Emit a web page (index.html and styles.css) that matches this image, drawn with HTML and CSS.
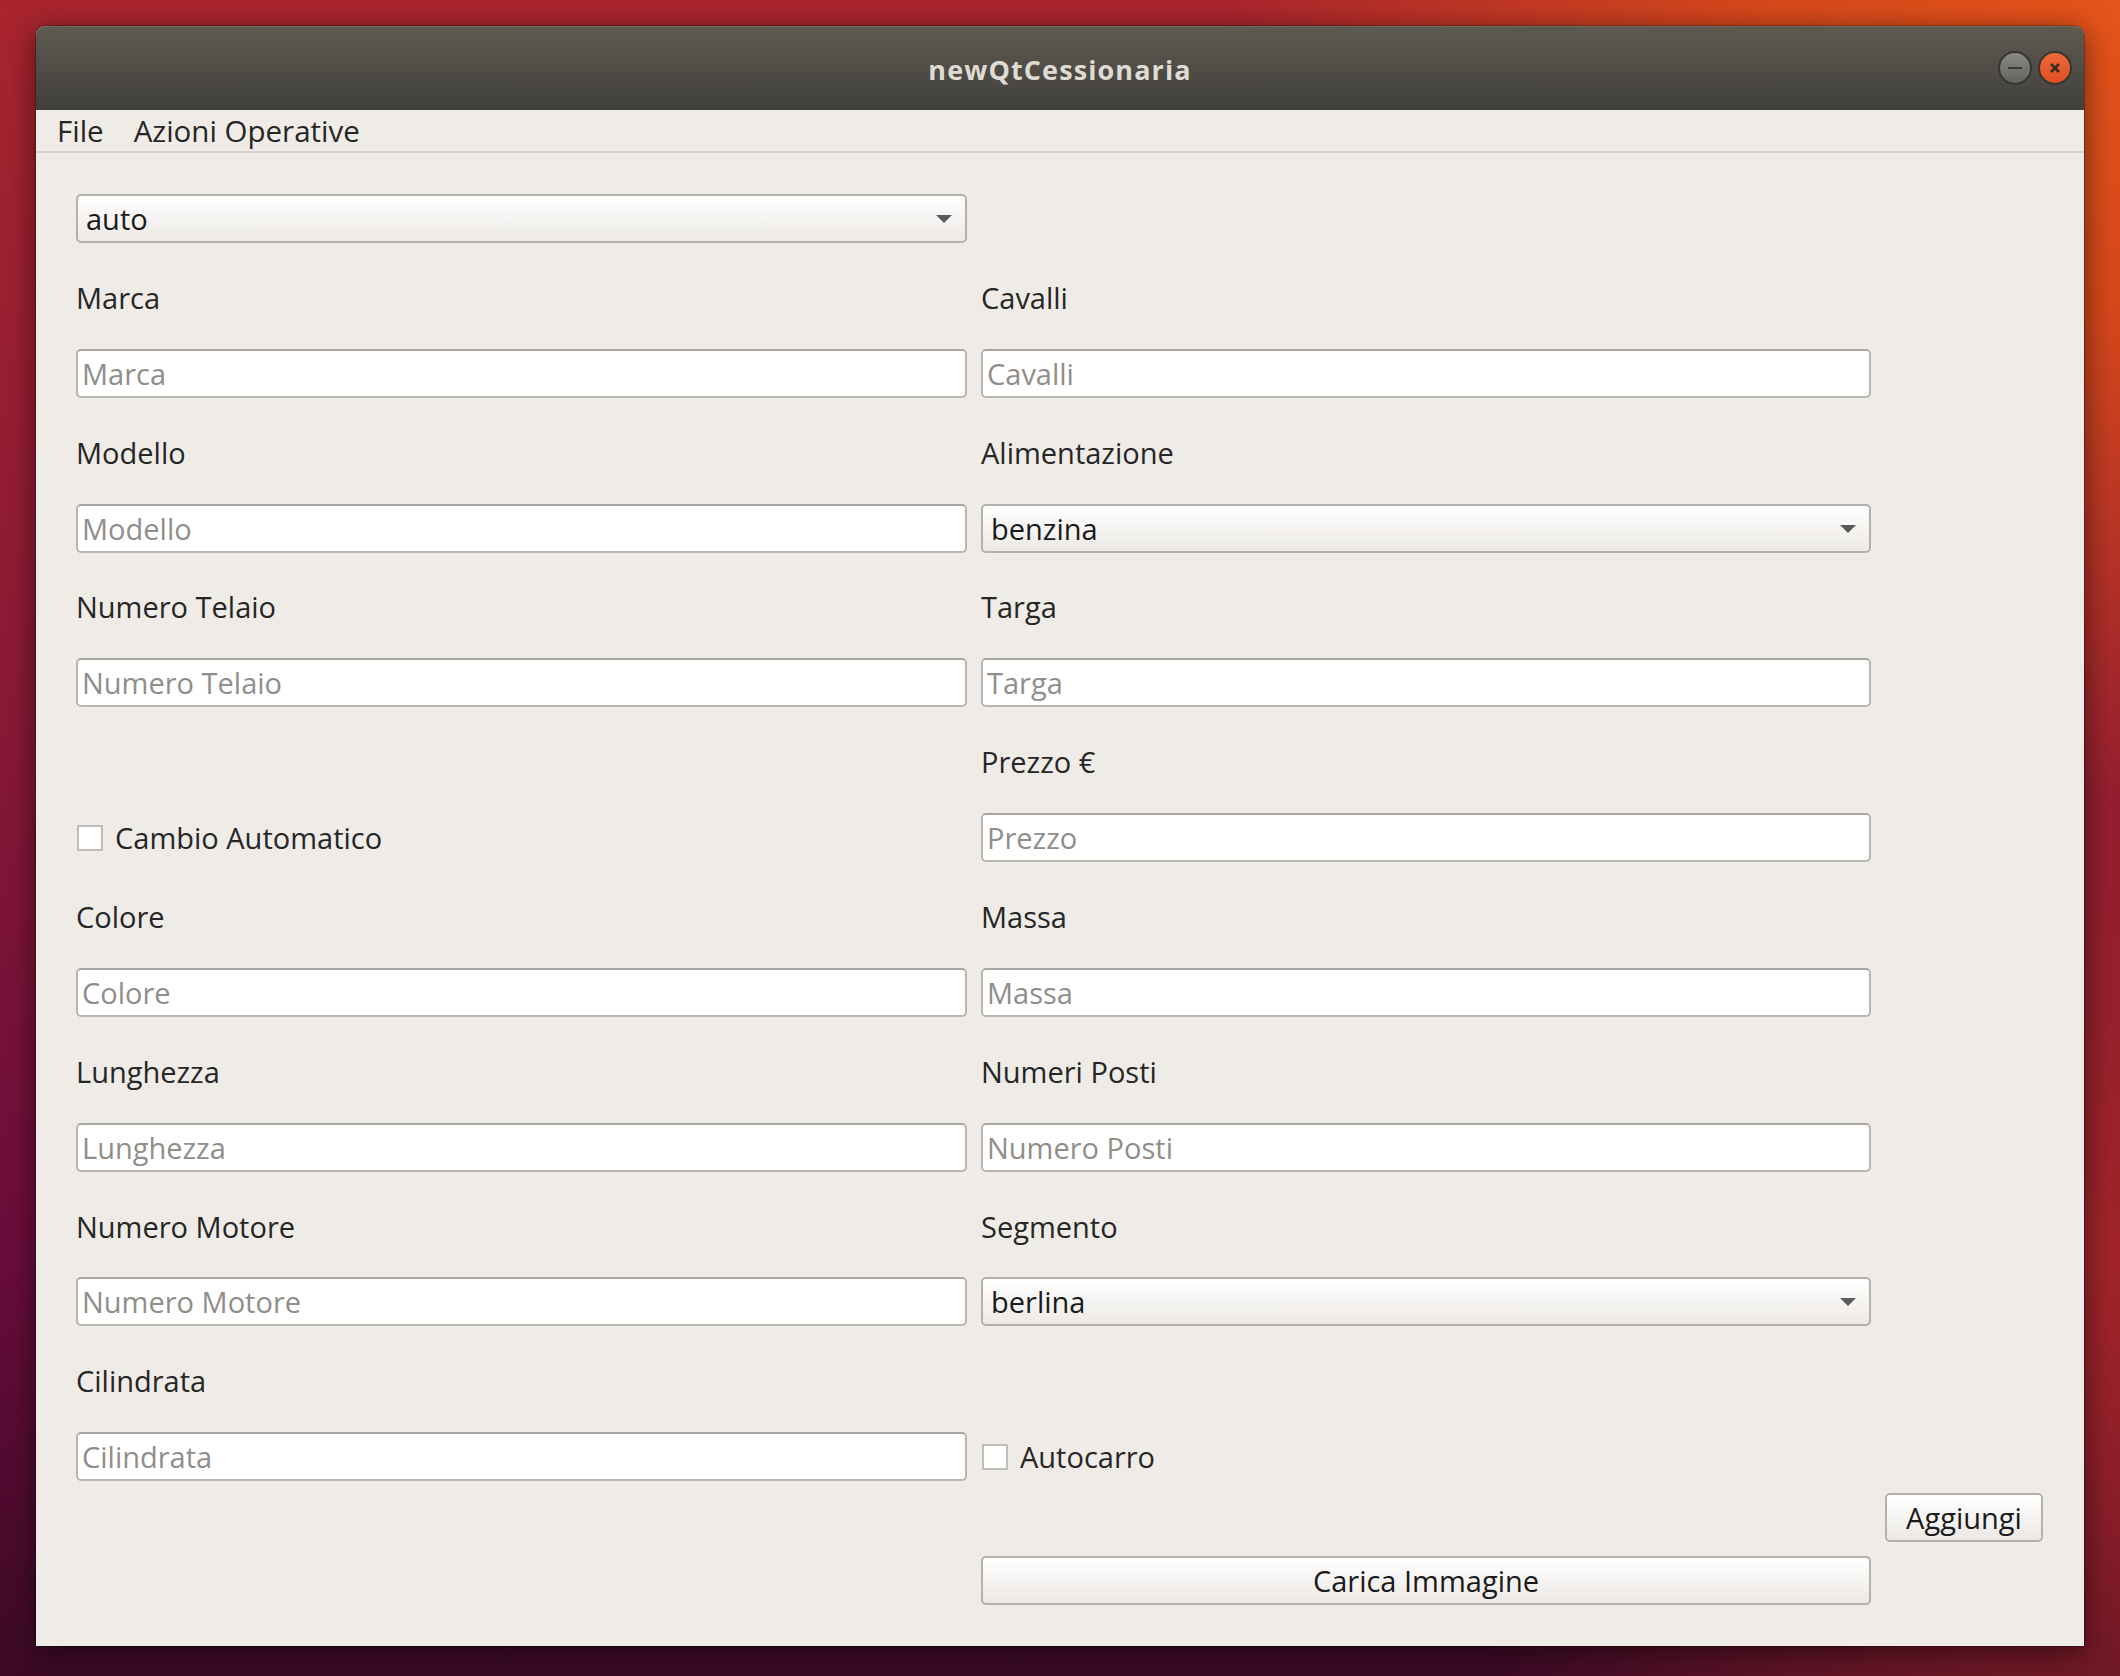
FILE: index.html
```html
<!DOCTYPE html>
<html lang="it">
<head>
<meta charset="utf-8">
<title>newQtCessionaria</title>
<link rel="stylesheet" href="styles.css">
</head>
<body>
<div class="desktop">
  <div class="window">
    <header class="titlebar">
      <span class="title">newQtCessionaria</span>
      <div class="controls">
        <span class="wbtn wbtn-min"><svg width="16" height="4" viewBox="0 0 16 4"><rect x="1" y="1" width="14" height="2" fill="#3a3935"/></svg></span>
        <span class="wbtn wbtn-close"><svg width="14" height="14" viewBox="0 0 14 14"><path d="M3 3 L11 11 M11 3 L3 11" stroke="#3b2a22" stroke-width="2.6"/></svg></span>
      </div>
    </header>
    <nav class="menubar">
      <span class="menu-item">File</span>
      <span class="menu-item">Azioni Operative</span>
    </nav>
    <main class="content">
      <div class="form-grid">
        <div class="combo"><span>auto</span><svg class="arrow" width="16" height="9" viewBox="0 0 16 9"><polygon points="0,0 16,0 8,8" fill="#5b5a58"/></svg></div>
        <div></div>

        <div class="label">Marca</div>
        <div class="label">Cavalli</div>
        <input class="field" type="text" placeholder="Marca">
        <input class="field" type="text" placeholder="Cavalli">

        <div class="label">Modello</div>
        <div class="label">Alimentazione</div>
        <input class="field" type="text" placeholder="Modello">
        <div class="combo"><span>benzina</span><svg class="arrow" width="16" height="9" viewBox="0 0 16 9"><polygon points="0,0 16,0 8,8" fill="#5b5a58"/></svg></div>

        <div class="label">Numero Telaio</div>
        <div class="label">Targa</div>
        <input class="field" type="text" placeholder="Numero Telaio">
        <input class="field" type="text" placeholder="Targa">

        <div></div>
        <div class="label">Prezzo €</div>
        <div class="checkrow"><span class="check"></span><span>Cambio Automatico</span></div>
        <input class="field" type="text" placeholder="Prezzo">

        <div class="label">Colore</div>
        <div class="label">Massa</div>
        <input class="field" type="text" placeholder="Colore">
        <input class="field" type="text" placeholder="Massa">

        <div class="label">Lunghezza</div>
        <div class="label">Numeri Posti</div>
        <input class="field" type="text" placeholder="Lunghezza">
        <input class="field" type="text" placeholder="Numero Posti">

        <div class="label">Numero Motore</div>
        <div class="label">Segmento</div>
        <input class="field" type="text" placeholder="Numero Motore">
        <div class="combo"><span>berlina</span><svg class="arrow" width="16" height="9" viewBox="0 0 16 9"><polygon points="0,0 16,0 8,8" fill="#5b5a58"/></svg></div>

        <div class="label">Cilindrata</div>
        <div></div>
        <input class="field" type="text" placeholder="Cilindrata">
        <div class="checkrow"><span class="check"></span><span>Autocarro</span></div>
      </div>
      <div class="actions-grid">
        <button class="pbtn add-btn" type="button">Aggiungi</button>
        <button class="pbtn load-btn" type="button">Carica Immagine</button>
      </div>
    </main>
  </div>
</div>
</body>
</html>
```
FILE: styles.css
```css
html, body {
  margin: 0;
  padding: 0;
}

body {
  width: 2120px;
  height: 1676px;
  overflow: hidden;
  font-family: "Open Sans", "Noto Sans", sans-serif;
  background:
    radial-gradient(ellipse 900px 800px at 100% 0%, #e4541a 0%, rgba(222, 78, 24, 0.85) 40%, rgba(200, 60, 30, 0) 100%),
    radial-gradient(ellipse 700px 900px at 100% 75%, rgba(168, 40, 38, 0.9) 0%, rgba(168, 40, 38, 0) 100%),
    linear-gradient(to bottom, #a9252e 0%, #8c1a36 40%, #6a0d3c 75%, #3c0a26 100%);
}

.desktop {
  box-sizing: border-box;
  height: 1676px;
  padding: 26px 0 0 36px;
}

.window {
  width: 2048px;
  height: 1620px;
  display: flex;
  flex-direction: column;
  background: #efece8;
  border-radius: 9px 9px 0 0;
  box-shadow: 0 6px 30px rgba(0, 0, 0, 0.55), 0 0 0 1px rgba(0, 0, 0, 0.25);
}

.titlebar {
  position: relative;
  height: 84px;
  flex: none;
  display: flex;
  align-items: center;
  justify-content: center;
  border-radius: 9px 9px 0 0;
  background: linear-gradient(to bottom, #5d5b51 0%, #4f4d46 50%, #42403b 100%);
  box-shadow: inset 0 1px 0 #6e6c61;
}

.title {
  color: #dfdbd2;
  font-size: 27px;
  font-weight: 700;
  letter-spacing: 1.1px;
  padding-top: 3px;
}

.controls {
  position: absolute;
  right: 12px;
  top: 25px;
  display: flex;
  gap: 6px;
}

.wbtn {
  width: 34px;
  height: 34px;
  box-sizing: border-box;
  border-radius: 50%;
  display: flex;
  align-items: center;
  justify-content: center;
  border: 2px solid #363530;
}

.wbtn-min {
  background: linear-gradient(to bottom, #8a8883, #65635e);
}

.wbtn-close {
  background: linear-gradient(to bottom, #f0693a, #dd4f22);
}

.menubar {
  height: 41px;
  flex: none;
  display: flex;
  align-items: center;
  padding-left: 6px;
  border-bottom: 2px solid #d6d2cd;
  font-size: 29.5px;
  color: #262626;
}

.menu-item {
  padding: 0 15px;
}

.content {
  flex: 1;
  box-sizing: border-box;
  padding: 41px 41px 0 40px;
}

.form-grid {
  display: grid;
  grid-template-columns: 891px 890px;
  grid-auto-rows: 49px;
  column-gap: 14px;
  row-gap: 28.4px;
}

.label {
  display: flex;
  align-items: center;
  padding-top: 3px;
  font-size: 29px;
  color: #262626;
}

.field {
  box-sizing: border-box;
  width: 100%;
  height: 49px;
  margin: 0;
  padding: 0 0 0 4px;
  background: #ffffff;
  border: 2px solid #b9b5b0;
  border-top-color: #a9a5a0;
  border-radius: 5px;
  font-family: "Open Sans", "Noto Sans", sans-serif;
  font-size: 29px;
  color: #262626;
  outline: none;
}

.field::placeholder {
  color: #908e8a;
}

.combo {
  box-sizing: border-box;
  height: 49px;
  display: flex;
  align-items: center;
  justify-content: space-between;
  padding: 0 13px 0 8px;
  background: linear-gradient(to bottom, #ffffff 0%, #f6f4f2 50%, #ece9e6 100%);
  border: 2px solid #b4b0ab;
  border-radius: 5px;
  font-size: 29px;
  color: #1a1a1a;
}

.combo .arrow {
  margin-top: 2px;
}

.checkrow {
  display: flex;
  align-items: center;
  gap: 12px;
  font-size: 29px;
  color: #262626;
  padding-left: 1px;
}

.check {
  width: 26px;
  height: 26px;
  box-sizing: border-box;
  background: #ffffff;
  border: 2px solid #bfbbb6;
  border-radius: 1px;
  flex: none;
}

.actions-grid {
  display: grid;
  grid-template-columns: 891px 890px 158px;
  grid-template-rows: 49px 49px;
  column-gap: 14px;
  row-gap: 14px;
  margin-top: 12px;
}

.pbtn {
  box-sizing: border-box;
  height: 49px;
  margin: 0;
  padding: 0;
  background: linear-gradient(to bottom, #ffffff 0%, #f6f4f2 50%, #ebe8e5 100%);
  border: 2px solid #b4b0ab;
  border-radius: 5px;
  font-family: "Open Sans", "Noto Sans", sans-serif;
  font-size: 29px;
  color: #1a1a1a;
}

.add-btn {
  grid-column: 3;
  grid-row: 1;
}

.load-btn {
  grid-column: 2;
  grid-row: 2;
}
```
